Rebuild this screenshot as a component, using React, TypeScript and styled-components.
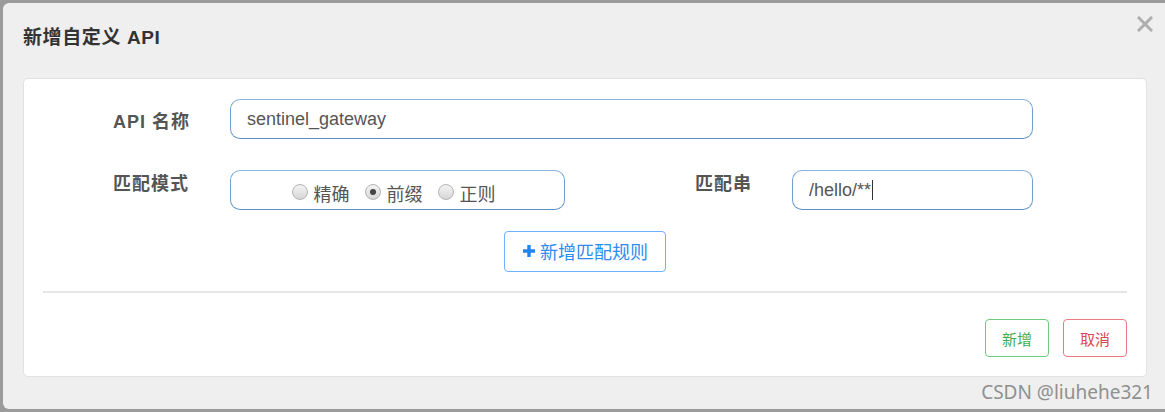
import styled, { createGlobalStyle } from 'styled-components';

const GlobalStyle = createGlobalStyle`
  html, body {
    margin: 0;
    padding: 0;
    background: #9b9b9b;
    overflow: hidden;
  }
  body {
    font-family: "Liberation Sans", "Noto Sans CJK SC", sans-serif;
  }
`

const Modal = styled.div`
  margin: 3px 0 0 3px;
  height: 406px;
  background: #efefef;
  border-radius: 6px 0 0 6px;
  display: flex;
  flex-direction: column;
  position: relative;
`

const Header = styled.div`
  padding: 25px 20px 30px 20px;
  display: flex;
  justify-content: space-between;
  align-items: center;
`

const Title = styled.h4`
  margin: 0;
  font-size: 19px;
  line-height: 20px;
  letter-spacing: 0.6px;
  font-weight: bold;
  color: #333;
`

const Close = styled.button`
  position: absolute;
  top: 13px;
  right: 12px;
  border: 0;
  background: none;
  padding: 0;
  cursor: pointer;
  display: flex;
`

const Card = styled.div`
  box-sizing: border-box;
  margin: 0 18px 0 20px;
  height: 299px;
  background: #fff;
  border: 1px solid #e2e2e2;
  border-radius: 5px;
  padding: 20px 19px 0 19px;
  display: flex;
  flex-direction: column;
`

const FormGrid = styled.div`
  display: grid;
  grid-template-columns: 117px 335px 130px 97px 241px;
  row-gap: 31px;
  padding-left: 70px;
`

const Label = styled.label<{ $top: number; $col?: number }>`
  grid-column: ${p => p.$col ?? 1};
  padding-top: ${p => p.$top}px;
  font-size: 18px;
  font-weight: bold;
  color: #555;
  letter-spacing: 1px;
  line-height: 20px;
`

const Field = styled.div<{ $span?: string }>`
  grid-column: ${p => p.$span ?? 'auto'};
  height: 40px;
  box-sizing: border-box;
  border: 1px solid #6d9fd3;
  border-top-color: #8ab4de;
  border-bottom-color: #5a8fc8;
  border-radius: 10px;
  padding: 0 16px;
  display: flex;
  align-items: center;
  font-size: 18px;
  color: #555;
`

const Caret = styled.span`
  display: inline-block;
  width: 1px;
  height: 20px;
  background: #333;
  margin-left: 1px;
`

const RadioGroup = styled.div`
  grid-column: 2;
  height: 40px;
  box-sizing: border-box;
  border: 1px solid #6d9fd3;
  border-top-color: #8ab4de;
  border-bottom-color: #5a8fc8;
  border-radius: 10px;
  display: flex;
  justify-content: center;
  align-items: center;
  gap: 15px;
  padding: 5px 8px 0 0;
`

const RadioLabel = styled.span`
  display: flex;
  align-items: center;
  gap: 6px;
  font-size: 18px;
  color: #555;
`

const Dot = styled.span<{ $checked?: boolean }>`
  width: 14px;
  height: 14px;
  border-radius: 50%;
  border: 1px solid #b4b4b4;
  background: linear-gradient(#f4f4f4, #d6d6d6);
  display: flex;
  align-items: center;
  justify-content: center;
  margin-top: -2px;
  &::after {
    content: '';
    width: 6px;
    height: 6px;
    border-radius: 50%;
    background: ${p => (p.$checked ? '#444' : 'transparent')};
  }
`

const AddRow = styled.div`
  display: flex;
  justify-content: center;
  padding-top: 21px;
`

const AddButton = styled.button`
  height: 41px;
  width: 162px;
  border: 1px solid #6fb0ff;
  border-radius: 4px;
  background: #fff;
  color: #2e8bef;
  font-size: 18px;
  font-family: inherit;
  display: flex;
  align-items: center;
  justify-content: center;
  gap: 4px;
  padding: 0 0 2px 0;
`

const Divider = styled.hr`
  margin: 19px 0 0 0;
  border: 0;
  border-top: 2px solid #e6e6e6;
`

const Footer = styled.div`
  display: flex;
  justify-content: flex-end;
  gap: 14px;
  padding-top: 26px;
`

const ActionButton = styled.button<{ $tone: 'green' | 'red' }>`
  height: 38px;
  width: 64px;
  background: #fff;
  border-radius: 4px;
  font-family: inherit;
  font-size: 15px;
  border: 1px solid ${p => (p.$tone === 'green' ? '#6fcb7c' : '#ec7a82')};
  color: ${p => (p.$tone === 'green' ? '#3fae4f' : '#dc4452')};
`

const Watermark = styled.div`
  position: absolute;
  right: 12px;
  bottom: 6px;
  font-family: "Noto Sans", "Liberation Sans", sans-serif;
  font-size: 19px;
  line-height: 22px;
  color: #909090;
`

const modes = [
  { text: '精确', checked: false },
  { text: '前缀', checked: true },
  { text: '正则', checked: false },
]

export default function App() {
  return (
    <>
      <GlobalStyle />
      <Modal>
        <Header>
          <Title>新增自定义 API</Title>
        </Header>
        <Close aria-label="close">
          <svg width="16" height="16" viewBox="0 0 16 16">
            <path d="M2 2 L14 14 M14 2 L2 14" stroke="#aeaeae" strokeWidth="3" strokeLinecap="square" />
          </svg>
        </Close>
        <Card>
          <FormGrid>
            <Label $top={13}>API 名称</Label>
            <Field $span="2 / 6">sentinel_gateway</Field>
            <Label $top={4}>匹配模式</Label>
            <RadioGroup>
              {modes.map(m => (
                <RadioLabel key={m.text}>
                  <Dot $checked={m.checked} />
                  {m.text}
                </RadioLabel>
              ))}
            </RadioGroup>
            <Label $top={4} $col={4}>匹配串</Label>
            <Field>
              /hello/**<Caret />
            </Field>
          </FormGrid>
          <AddRow>
            <AddButton>
              <svg width="14" height="14" viewBox="0 0 14 14">
                <path d="M7 1 V13 M1 7 H13" stroke="#1f86ee" strokeWidth="3.4" />
              </svg>
              新增匹配规则
            </AddButton>
          </AddRow>
          <Divider />
          <Footer>
            <ActionButton $tone="green">新增</ActionButton>
            <ActionButton $tone="red">取消</ActionButton>
          </Footer>
        </Card>
        <Watermark>CSDN @liuhehe321</Watermark>
      </Modal>
    </>
  )
}
